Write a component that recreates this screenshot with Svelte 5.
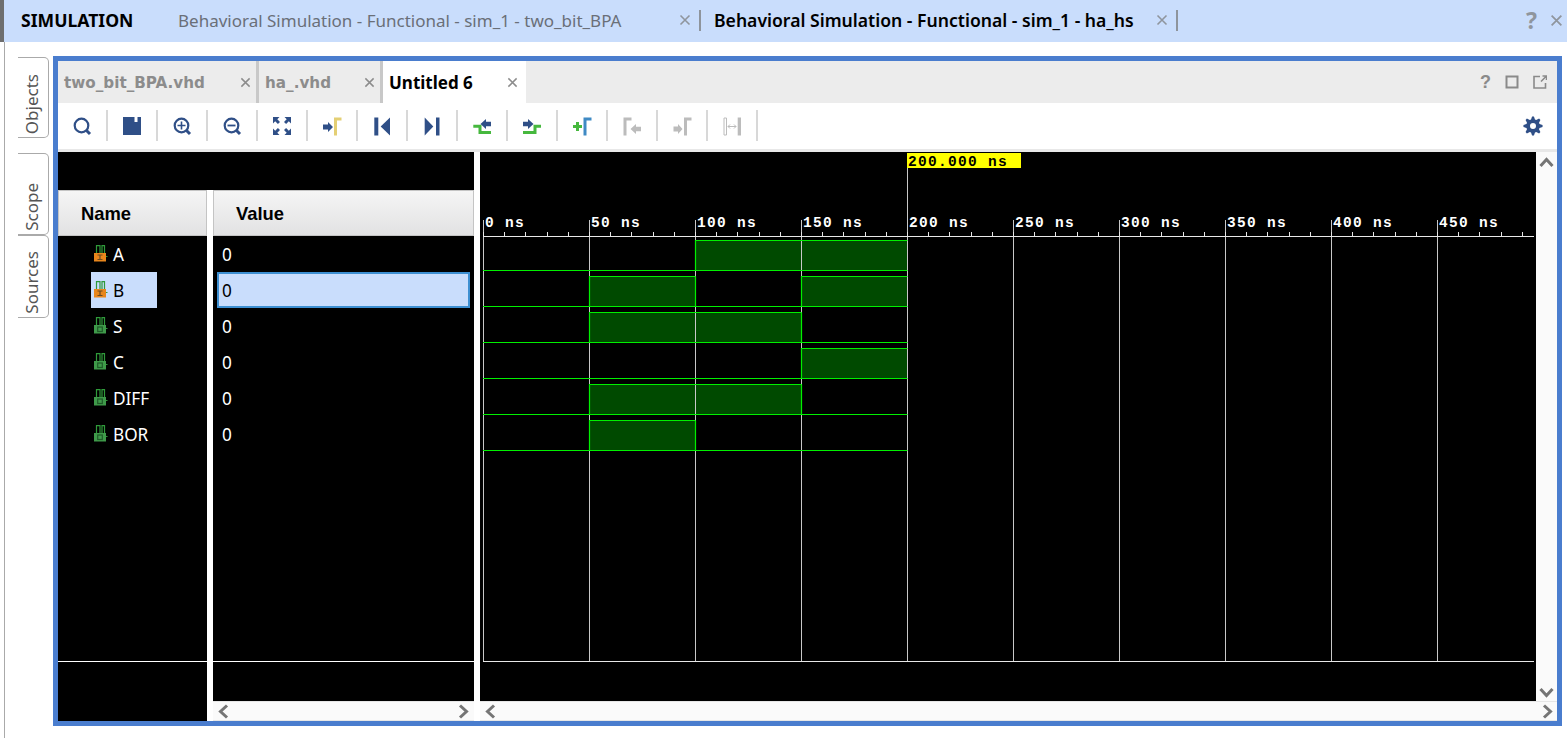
<script>
  const BLUE = '#2f4f87';
  const GREEN = '#46b83e';
  const GREY = '#bcbcbc';

  const signals = [
    { name: 'A', kind: 'in', wave: [0, 0, 1, 1] },
    { name: 'B', kind: 'in', wave: [0, 1, 0, 1], selected: true },
    { name: 'S', kind: 'out', wave: [0, 1, 1, 0] },
    { name: 'C', kind: 'out', wave: [0, 0, 0, 1] },
    { name: 'DIFF', kind: 'out', wave: [0, 1, 1, 0] },
    { name: 'BOR', kind: 'out', wave: [0, 1, 0, 0] }
  ];

  // ruler
  const x0 = 483;
  const step = 106;
  const majors = Array.from({ length: 10 }, (_, i) => i);
  const minors = Array.from({ length: 50 }, (_, i) => x0 + (i * step) / 5).filter(x => x < 1534);

  function rowTop(i) { return 240 + i * 36; }
  function rowLow(i) { return 270 + i * 36; }

  function edgePath(wave, i) {
    const top = rowTop(i) + 0.5;
    const low = rowLow(i) + 0.5;
    let d = `M ${x0} ${low}`;
    wave.forEach((v, k) => {
      const a = x0 + k * step + 0.5;
      const b = a + step;
      const y = v ? top : low;
      d += ` L ${a} ${y} L ${b} ${y}`;
      if (v) d += ` M ${a} ${low} L ${b} ${low} M ${b} ${top}`;
    });
    return d;
  }

  function gear() {
    let d = '';
    const n = 8;
    for (let i = 0; i < n * 4; i++) {
      const a = ((i - 0.5) / (n * 4)) * Math.PI * 2;
      const r = i % 4 < 2 ? 9.6 : 6.8;
      d += `${i ? 'L' : 'M'} ${(10 + r * Math.cos(a)).toFixed(2)} ${(10 + r * Math.sin(a)).toFixed(2)} `;
    }
    return d + 'Z M 10 7 A 3 3 0 1 0 10 13 A 3 3 0 1 0 10 7 Z';
  }

  const lens = [
    { circle: true },
    { d: 'M14.5 14.5L18 18', stroke: BLUE, sw: 3 }
  ];

  const corner = 'M1 1h6.5L5.3 3.2 8 5.9 5.9 8 3.2 5.3 1 7.5z';

  const tools = [
    { shapes: lens },
    { shapes: [
      { d: 'M1 1H19V19H1Z', fill: BLUE },
      { d: 'M12.5 1H15.5V6H12.5Z', fill: '#fff' }
    ] },
    { shapes: [...lens, { d: 'M5.5 9.5H13.5M9.5 5.5V13.5', stroke: BLUE, sw: 1.6 }] },
    { shapes: [...lens, { d: 'M5.5 9.5H13.5', stroke: BLUE, sw: 1.8 }] },
    { shapes: [
      { d: corner, fill: BLUE },
      { d: corner, fill: BLUE, t: 'translate(20 0) scale(-1 1)' },
      { d: corner, fill: BLUE, t: 'translate(0 20) scale(1 -1)' },
      { d: corner, fill: BLUE, t: 'translate(20 20) scale(-1 -1)' }
    ] },
    { shapes: [
      { d: 'M1 8.5H6V6L11 11L6 16V13.5H1Z', fill: BLUE },
      { d: 'M12 1.5H19.5V4.5H15V19.5H12Z', fill: '#e4cf74' }
    ] },
    { shapes: [
      { d: 'M2.3 1.5H6.3V19.5H2.3Z', fill: BLUE },
      { d: 'M18 1.5V19.5L8.7 10.5Z', fill: BLUE }
    ] },
    { shapes: [
      { d: 'M2.7 1.5V19.5L11.3 10.5Z', fill: BLUE },
      { d: 'M14 1.5H17.5V19.5H14Z', fill: BLUE }
    ] },
    { shapes: [
      { d: 'M1.3 10.2H8V16.5H19', stroke: GREEN, sw: 3 },
      { d: 'M8.5 8L14 3V5.7H19V10.3H14V13Z', fill: BLUE }
    ] },
    { shapes: [
      { d: 'M1 16.5H13V10.2H19', stroke: GREEN, sw: 3 },
      { d: 'M1 5.7H6V3L11.5 8L6 13V10.3H1Z', fill: BLUE }
    ] },
    { shapes: [
      { d: 'M5.5 6V15M1 10.5H10', stroke: GREEN, sw: 3 },
      { d: 'M11.5 1.5H19.5V4.5H14.5V19.5H11.5Z', fill: '#3f8ac4' }
    ] },
    { shapes: [
      { d: 'M1.5 1.5H9.5V4.5H4.5V19.5H1.5Z', fill: GREY },
      { d: 'M8.5 13L14 8V10.7H19V15.3H14V18Z', fill: GREY }
    ] },
    { shapes: [
      { d: 'M1.5 10.5H6V8L10.5 13L6 18V15.5H1.5Z', fill: GREY },
      { d: 'M12 1.5H19.5V4.5H15V19.5H12Z', fill: GREY }
    ] },
    { shapes: [
      { d: 'M2 2H4.5V19H2Z', stroke: GREY, sw: 1 },
      { d: 'M15.7 1.5H19V19.5H15.7Z', fill: GREY },
      { d: 'M6 10.5H14M8 8.5L6 10.5L8 12.5M12 8.5L14 10.5L12 12.5', stroke: GREY, sw: 1 }
    ] }
  ];

  const railTabs = [
    { label: 'Objects', h: 81, gap: 15 },
    { label: 'Scope', h: 82, gap: 0 },
    { label: 'Sources', h: 83, gap: 0 }
  ];

  const fileTabs = [
    { label: 'two_bit_BPA.vhd', w: 201 },
    { label: 'ha_.vhd', w: 124 },
    { label: 'Untitled 6', w: 143, active: true }
  ];
</script>

{#snippet closeX(size, color)}
  <svg class="x" width={size} height={size} viewBox="0 0 12 12">
    <path d="M1.5 1.5L10.5 10.5M10.5 1.5L1.5 10.5" stroke={color} stroke-width="1.6" fill="none" />
  </svg>
{/snippet}

{#snippet chevron(dir)}
  <svg class="chev chev-{dir}" width="15" height="15" viewBox="0 0 15 15">
    <path d="M11 1.5L4.5 7.5L11 13.5" stroke="#757575" stroke-width="3" fill="none" />
  </svg>
{/snippet}

{#snippet signalIcon(kind)}
  <svg class="sig" width="15" height="17" viewBox="0 0 15 17">
    <path d="M2.5 8V0.7H6V8M8 8V0.7H10.5V11.5H13.5" stroke="#2f9a3a" stroke-width="1.2" fill="none" />
    {#if kind === 'in'}
      <rect x="0" y="8" width="12" height="8.5" fill="#e8861c" />
      <path d="M3.5 10H8.5M6 10V14.5M3.5 14.5H8.5" stroke="#6b4a20" stroke-width="1.2" fill="none" />
    {:else}
      <rect x="0" y="8" width="12" height="8.5" fill="#3f9a4a" />
      <rect x="3.7" y="10" width="4.6" height="4.5" stroke="#1f5a28" stroke-width="1.2" fill="none" />
    {/if}
  </svg>
{/snippet}

<div class="page">
  <header class="top">
    <span class="title">SIMULATION</span>
    <span class="stab dim">Behavioral Simulation - Functional - sim_1 - two_bit_BPA</span>
    <span class="sx">{@render closeX(12, '#8f959d')}</span>
    <i class="ssep"></i>
    <span class="stab strong">Behavioral Simulation - Functional - sim_1 - ha_hs</span>
    <span class="sx">{@render closeX(12, '#8f959d')}</span>
    <i class="ssep"></i>
    <span class="top-help">?</span>
    <span class="top-close">{@render closeX(13, '#8f959d')}</span>
  </header>

  <div class="body">
    <nav class="rail">
      {#each railTabs as t}
        <div class="rail-tab" style="height:{t.h}px;margin-bottom:{t.gap}px"><span>{t.label}</span></div>
      {/each}
    </nav>

    <main class="panel">
      <div class="tabs">
        {#each fileTabs as t}
          <div class="tab" class:active={t.active} style="width:{t.w}px">
            <span class="tab-label">{t.label}</span>
            {@render closeX(11, '#8c8c8c')}
          </div>
        {/each}
        <div class="tab-actions">
          <span class="q">?</span>
          <svg width="14" height="14" viewBox="0 0 14 14"><rect x="1.5" y="1.5" width="11" height="11" stroke="#8a8a8a" stroke-width="2" fill="none" /></svg>
          <svg width="14" height="14" viewBox="0 0 14 14"><path d="M7 1.5H1V13H12.5V8M8 6.5L13 1.5M9.5 1H13.5V5" stroke="#8a8a8a" stroke-width="1.6" fill="none" /></svg>
        </div>
      </div>

      <div class="toolbar">
        {#each tools as tool}
          <div class="tool">
            <svg width="20" height="20" viewBox="0 0 20 20">
              {#each tool.shapes as s}
                {#if s.circle}
                  <circle cx="9.5" cy="9.5" r="6.8" stroke={BLUE} stroke-width="2.2" fill="none" />
                {:else}
                  <path d={s.d} fill={s.fill ?? 'none'} stroke={s.stroke ?? 'none'} stroke-width={s.sw ?? 0} transform={s.t} />
                {/if}
              {/each}
            </svg>
          </div>
        {/each}
        <svg class="gear" width="20" height="20" viewBox="0 0 20 20"><path d={gear()} fill={BLUE} fill-rule="evenodd" /></svg>
      </div>

      <div class="viewer">
        <section class="col names">
          <div class="spacer"></div>
          <div class="head">Name</div>
          <div class="rows">
            {#each signals as s}
              <div class="row">
                <div class="name" class:sel={s.selected}>
                  {@render signalIcon(s.kind)}
                  <span>{s.name}</span>
                </div>
              </div>
            {/each}
          </div>
          <div class="rule"></div>
          <div class="after"></div>
        </section>

        <section class="col values">
          <div class="spacer"></div>
          <div class="head">Value</div>
          <div class="rows">
            {#each signals as s}
              <div class="row">
                <div class="value" class:sel={s.selected}>0</div>
              </div>
            {/each}
          </div>
          <div class="rule"></div>
          <div class="after"></div>
          <div class="hbar">
            {@render chevron('left')}
            {@render chevron('right')}
          </div>
        </section>

        <section class="waves">
          <svg class="canvas" width="1056" height="549" viewBox="480 152 1056 549">
            <rect x="907" y="153" width="114" height="15" fill="#ffff00" />
            <text class="cursor" x="908" y="166">200.000 ns</text>

            {#each signals as s, i}
              {#each s.wave as v, k}
                {#if v}
                  <rect x={x0 + k * step} y={rowTop(i)} width={step} height={rowLow(i) - rowTop(i)} fill="#004a00" />
                {/if}
              {/each}
            {/each}

            {#each majors as m}
              <line class="grid" x1={x0 + m * step + 0.5} x2={x0 + m * step + 0.5} y1={m === 4 ? 168 : 220} y2="661" />
              <text class="tick" x={x0 + m * step + 2} y="227">{m * 50} ns</text>
            {/each}
            {#each minors as x}
              <line class="minor" x1={Math.round(x) + 0.5} x2={Math.round(x) + 0.5} y1="232" y2="236" />
            {/each}
            <line class="axis" x1={x0} x2="1534" y1="236.5" y2="236.5" />
            <line class="axis" x1={x0} x2="1534" y1="661.5" y2="661.5" />

            {#each signals as s, i}
              <path d={edgePath(s.wave, i)} fill="none" stroke="#00f000" stroke-width="1.2" />
            {/each}
          </svg>
          <div class="hbar wide">
            {@render chevron('left')}
            {@render chevron('right')}
          </div>
        </section>

        <aside class="vbar">
          {@render chevron('up')}
          {@render chevron('down')}
        </aside>
      </div>
    </main>
  </div>
</div>

<style>
  :global(body) {
    margin: 0;
    background: #fff;
    overflow: hidden;
  }
  .page {
    width: 1567px;
    height: 738px;
    display: flex;
    flex-direction: column;
    font-family: "Noto Sans", "Open Sans", sans-serif;
  }

  .top {
    height: 42px;
    flex: none;
    display: flex;
    align-items: center;
    background: #c9ddfc;
    border-left: 4px solid #6e6e6e;
    padding: 0 4px 2px 17px;
    box-sizing: border-box;
  }
  .title {
    font-weight: 700;
    font-size: 17.6px;
    color: #000;
    width: 157px;
    flex: none;
  }
  .stab {
    white-space: nowrap;
    flex: none;
  }
  .stab.dim {
    color: #6a6f78;
    width: 501px;
    font-size: 17px;
  }
  .stab.strong {
    color: #000;
    font-weight: 600;
    width: 442px;
    margin-left: -1px;
    font-size: 17.6px;
  }
  .sx {
    display: flex;
    flex: none;
  }
  .ssep {
    width: 2px;
    height: 21px;
    background: #8e949c;
    flex: none;
    margin: 0 14px 0 8px;
  }
  .top-help {
    margin-left: auto;
    font-size: 23px;
    font-weight: 700;
    color: #8f959d;
  }
  .top-close {
    display: flex;
    margin-left: 13px;
  }

  .body {
    flex: 1;
    display: flex;
    padding-top: 14px;
    padding-bottom: 12px;
    min-height: 0;
  }
  .rail {
    width: 49px;
    margin-left: 4px;
    margin-top: -14px;
    margin-bottom: -12px;
    padding: 15px 0 0 13px;
    border-left: 1px solid #aaa;
    box-sizing: border-box;
    flex: none;
  }
  .rail-tab {
    width: 31px;
    box-sizing: border-box;
    border: 1px solid #aaa;
    border-left: none;
    border-radius: 0 5px 5px 0;
    display: flex;
    align-items: flex-end;
    justify-content: center;
    padding: 0 3px 3px 0;
    background: #fff;
  }
  .rail-tab span {
    writing-mode: vertical-rl;
    transform: rotate(180deg);
    font-size: 17px;
    color: #555;
  }

  .panel {
    width: 1509px;
    border: 5px solid #4a7dce;
    box-sizing: border-box;
    display: flex;
    flex-direction: column;
    min-height: 0;
  }

  .tabs {
    height: 42px;
    flex: none;
    display: flex;
    background: #ececec;
  }
  .tab {
    box-sizing: border-box;
    display: flex;
    align-items: center;
    justify-content: space-between;
    padding: 0 5px 0 6px;
    border-right: 3px solid #c8c8c8;
    font-family: "DejaVu Sans", sans-serif;
    font-weight: 700;
    font-size: 15.2px;
    color: #8c8c8c;
  }
  .tab-label {
    padding-top: 2px;
  }
  .tab.active {
    background: #fff;
    color: #000;
    border-right: none;
    font-family: "Noto Sans", sans-serif;
    font-size: 17px;
    padding: 0 8px 0 6px;
  }
  .tab.active .tab-label {
    padding-top: 0;
  }
  .tab-actions {
    margin-left: auto;
    display: flex;
    align-items: center;
    gap: 14px;
    padding-right: 10px;
  }
  .q {
    font-size: 18px;
    font-weight: 700;
    color: #8a8a8a;
    font-family: "Liberation Sans", sans-serif;
  }

  .toolbar {
    height: 49px;
    flex: none;
    box-sizing: border-box;
    display: flex;
    align-items: center;
    background: #fff;
    border-bottom: 3px solid #e8e8e8;
    padding-bottom: 1px;
  }
  .tool {
    width: 50px;
    height: 31px;
    flex: none;
    box-sizing: border-box;
    display: flex;
    align-items: center;
    justify-content: center;
    border-right: 2px solid #d8d8d8;
  }
  .gear {
    margin-left: auto;
    margin-right: 14px;
  }

  .viewer {
    flex: 1;
    display: flex;
    min-height: 0;
    background: #fff;
  }
  .col {
    display: flex;
    flex-direction: column;
    flex: none;
    color: #fff;
  }
  .names {
    width: 149px;
    margin-right: 6px;
    background: #000;
  }
  .values {
    width: 261px;
    margin-right: 6px;
  }
  .spacer {
    height: 38px;
    background: #000;
    flex: none;
  }
  .names .spacer {
    margin-right: -6px;
  }
  .head {
    height: 46px;
    flex: none;
    box-sizing: border-box;
    display: flex;
    align-items: center;
    padding: 2px 0 0 22px;
    border: 1px solid #c4c4c4;
    background: linear-gradient(#f5f5f5, #e2e2e3);
    font-family: "Liberation Sans", Arial, sans-serif;
    font-weight: 700;
    font-size: 18.4px;
    color: #000;
  }
  .rows {
    flex: 1;
    background: #000;
    min-height: 0;
  }
  .row {
    height: 36px;
    display: flex;
    align-items: stretch;
    font-size: 17.2px;
  }
  .name {
    margin-left: 33px;
    width: 66px;
    box-sizing: border-box;
    padding: 1px 0 0 3px;
    display: flex;
    align-items: center;
    gap: 4px;
    color: #fff;
  }
  .name.sel,
  .value.sel {
    background: #c9ddfc;
    color: #000;
  }
  .value {
    flex: 1;
    margin: 0 4px;
    display: flex;
    align-items: center;
    box-sizing: border-box;
    border: 2px solid transparent;
    border-left-width: 0;
    padding: 1px 0 0 5px;
  }
  .value.sel {
    border: 2px solid #3d8fd1;
    padding-left: 3px;
  }
  .sig {
    flex: none;
    margin-top: -3px;
  }
  .rule {
    height: 1px;
    flex: none;
    background: #fff;
  }
  .after {
    height: 39px;
    background: #000;
    flex: none;
  }
  .names .after {
    height: 59px;
  }
  .hbar {
    height: 20px;
    flex: none;
    box-sizing: border-box;
    display: flex;
    justify-content: space-between;
    align-items: center;
    padding: 0 3px;
    background: #fafafa;
    border-top: 1px solid #e6e6e6;
    border-bottom: 1px solid #e6e6e6;
  }
  .hbar.wide {
    position: relative;
    margin-right: -21px;
    padding-right: 2px;
  }

  .waves {
    width: 1056px;
    flex: none;
    display: flex;
    flex-direction: column;
  }
  .canvas {
    display: block;
    background: #000;
  }
  .grid {
    stroke: #c8c8c8;
    stroke-width: 1;
  }
  .minor,
  .axis {
    stroke: #e8e8e8;
    stroke-width: 1;
  }
  .tick,
  .cursor {
    font-family: "Liberation Mono", monospace;
    font-weight: 700;
    font-size: 14.5px;
    letter-spacing: 1.3px;
  }
  .tick {
    fill: #fff;
  }
  .cursor {
    fill: #000;
  }

  .vbar {
    flex: 1;
    display: flex;
    flex-direction: column;
    justify-content: space-between;
    align-items: center;
    padding: 3px 0 21px;
    background: #fafafa;
  }
  .chev {
    display: block;
    flex: none;
  }
  .chev-right {
    transform: rotate(180deg);
  }
  .chev-up {
    transform: rotate(90deg);
  }
  .chev-down {
    transform: rotate(-90deg);
  }
</style>
